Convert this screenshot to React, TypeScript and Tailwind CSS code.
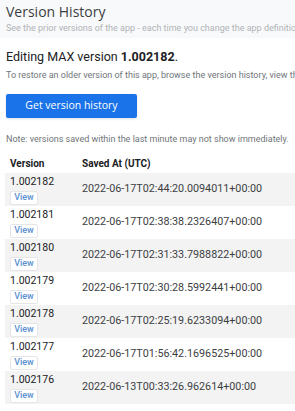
import React from 'react'

const versions = [
  { v: '1.002182', at: '2022-06-17T02:44:20.0094011+00:00' },
  { v: '1.002181', at: '2022-06-17T02:38:38.2326407+00:00' },
  { v: '1.002180', at: '2022-06-17T02:31:33.7988822+00:00' },
  { v: '1.002179', at: '2022-06-17T02:30:28.5992441+00:00' },
  { v: '1.002178', at: '2022-06-17T02:25:19.6233094+00:00' },
  { v: '1.002177', at: '2022-06-17T01:56:42.1696525+00:00' },
  { v: '1.002176', at: '2022-06-13T00:33:26.962614+00:00' },
]

export default function App() {
  return (
    <div className="w-[295px] h-[411px] overflow-hidden bg-white font-['Roboto',sans-serif] whitespace-nowrap">
      {/* Header */}
      <div className="h-[38px] bg-[#f8f9fa] px-[6px] pt-[3px]">
        <h2 className="text-[14px] leading-[18px] text-[#3c4043] font-['Open_Sans',sans-serif]">Version History</h2>
        <p className="text-[9px] leading-[13px] text-[#b0b3b8] mt-[1px]">
          See the prior versions of the app - each time you change the app definition
        </p>
      </div>

      <div className="px-[6px]">
        <p className="mt-[11px] text-[12.5px] leading-[16px] text-[#202124]">
          Editing MAX version <span className="font-bold">1.002182</span>.
        </p>
        <p className="mt-[3px] text-[9px] leading-[14px] text-[#70757a]">
          To restore an older version of this app, browse the version history, view th
        </p>

        <button className="mt-[12px] w-[131px] h-[24px] rounded-[2px] bg-[#1a73e8] text-white text-[10.5px] font-medium font-['Open_Sans',sans-serif] shadow-sm">
          Get version history
        </button>

        <p className="mt-[14px] text-[9px] leading-[14px] text-[#70757a]">
          Note: versions saved within the last minute may not show immediately.
        </p>
      </div>

      {/* Table */}
      <div className="ml-[5px] mt-[7px]">
        <div className="flex h-[20px] items-center text-[10px] font-bold text-[#202124]">
          <div className="w-[77px] pl-[5px]">Version</div>
          <div>Saved At (UTC)</div>
        </div>
        {versions.map((row, i) => (
          <div
            key={row.v}
            className={`flex h-[33px] items-center ${i % 2 === 0 ? 'bg-[#f3f3f3]' : 'bg-white'}`}
          >
            <div className="w-[77px] pl-[5px] flex flex-col items-start">
              <span className="text-[10.5px] leading-[13px] text-[#202124]">{row.v}</span>
              <span className="mt-[3px] w-[28px] h-[14px] flex items-center justify-center bg-white border border-[#e6e6e6] rounded-[2px] text-[9px] font-medium text-[#5b8fd0]">
                View
              </span>
            </div>
            <div className="text-[10.75px] text-[#3c4043]">{row.at}</div>
          </div>
        ))}
      </div>
    </div>
  )
}
